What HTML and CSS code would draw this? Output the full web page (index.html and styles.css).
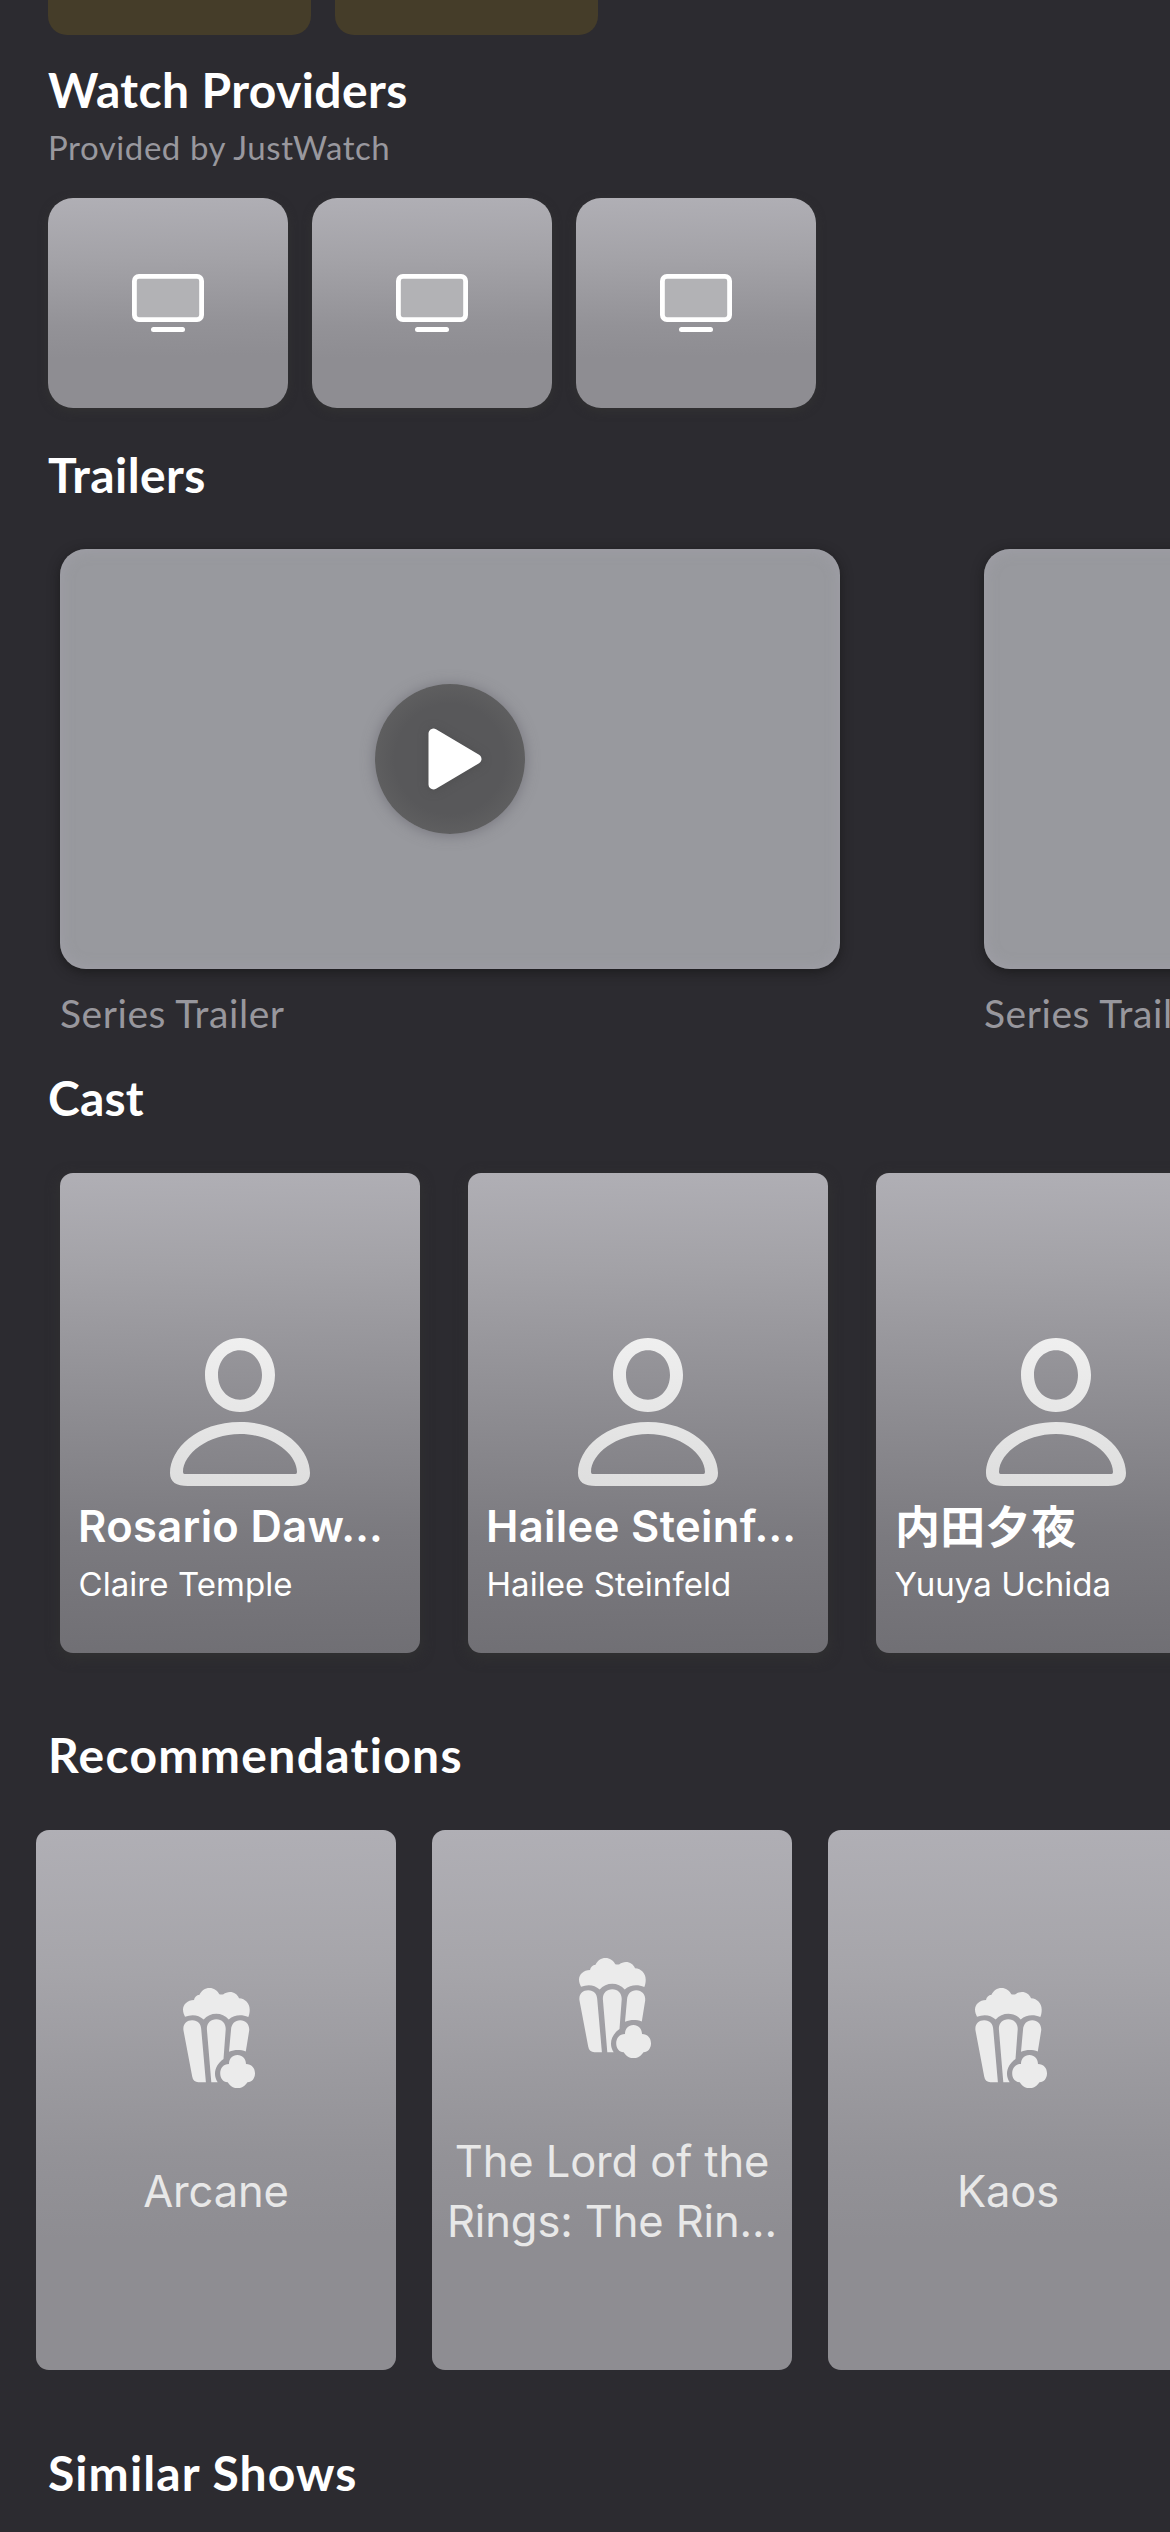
FILE: index.html
```
<!DOCTYPE html>
<html lang="en">
<head>
<meta charset="utf-8">
<title>Show details</title>
<link rel="stylesheet" href="styles.css">
</head>
<body>
<svg class="defs" width="0" height="0" aria-hidden="true">
  <defs>
    <linearGradient id="person-fill" x1="0" y1="0" x2="0" y2="148" gradientUnits="userSpaceOnUse">
      <stop offset="0" stop-color="#efefef"/><stop offset="1" stop-color="#dedede"/>
    </linearGradient>
    <symbol id="tv" viewBox="0 0 72 58">
      <rect x="2.4" y="2.4" width="67.2" height="43.2" rx="4.5" fill="#b2b2b5" stroke="#fff" stroke-width="4.8"/>
      <rect x="19" y="53" width="34" height="5" rx="2.5" fill="#fff"/>
    </symbol>
    <symbol id="person" viewBox="0 0 140 148">
      <g fill="url(#person-fill)" fill-rule="evenodd">
        <path d="M70 0C89.500 0 105 16 105 37S89.500 74 70 74 35 58 35 37 50.500 0 70 0ZM70 12.300C57.500 12.300 48 23 48 37S57.500 61.700 70 61.700 92 51 92 37 82.500 12.300 70 12.300Z"/>
        <path d="M70 84C113 84 140 111 140 135C140 144 134 148 122 148H18C6 148 0 144 0 135C0 111 27 84 70 84ZM70 96C38 96 13 116 13 134Q13 136 14.500 136H125.500Q127 136 127 134C127 116 102 96 70 96Z"/>
      </g>
    </symbol>
    <symbol id="popcorn" viewBox="0 0 72 100.500">
      <g fill="#ebebeb">
        <path d="M2 28.700C1 26.500 0 24.500 0 21.500C0 16.500 4.500 12 11 12C11.500 9 13.500 7 16.500 6.700C18.500 2.500 22 0 26.500 0S34 2.300 36.300 6.200Q38.500 7 40.500 6.200C42 5 44.500 4 47 4C51 4 54.500 6.500 56 10.200C62.500 10.600 66.700 15.500 66.700 21.500C66.700 24.500 66.200 27 65.300 29C58.500 26.200 51.500 26.500 45.700 31.500C39.500 23.700 27 23.700 20.700 31.500C15.500 26.500 8.500 26.200 2 28.700Z"/>
        <path d="M.5 42.500C-.5 36.500 3.500 32.300 9.200 32.300S18 36 18.200 41L22.900 94.200H15.500C12 94.200 9.800 92.300 9.200 88.500Z"/>
        <path d="M23.900 41.500C23.500 35.500 27.500 31.300 33.300 31.300S43 35.500 42.700 41.500L40.500 71C32 77 29.500 86.500 34.700 94.200H28.300Z"/>
        <path d="M48 42C48.300 36 52 32.300 57.300 32.300S66.800 36.500 66.200 42.500L62.800 63.500C57.500 61.500 51.500 61.500 46 63.800Z"/>
        <path d="M46 76C46 70.500 49.500 67 54.400 67S62.900 70.500 63 76C68.500 76 72 80 72 85.300S69 94 64.500 94.300C62 98 58.500 100.300 54.500 100.300S47 98 44.700 94.300C40 94 37.200 90.500 37.200 85.300S40.500 76 46 76Z"/>
      </g>
    </symbol>
  </defs>
</svg>

<main class="screen">
  <div class="tabs"><span class="tab"></span><span class="tab"></span></div>

  <section class="providers">
    <h2 class="title title-providers">Watch Providers</h2>
    <p class="source">Provided by JustWatch</p>
    <div class="provider-row">
      <div class="provider"><svg class="tv"><use href="#tv"/></svg></div>
      <div class="provider"><svg class="tv"><use href="#tv"/></svg></div>
      <div class="provider"><svg class="tv"><use href="#tv"/></svg></div>
    </div>
  </section>

  <section class="trailers">
    <h2 class="title">Trailers</h2>
    <div class="trailer-row">
      <article class="trailer">
        <div class="thumb">
          <div class="play">
            <svg class="triangle" viewBox="0 0 54 62"><path d="M5.500 5.500V56.500L48.500 31Z" fill="#fff" stroke="#fff" stroke-width="10" stroke-linejoin="round"/></svg>
          </div>
        </div>
        <p class="caption">Series Trailer</p>
      </article>
      <article class="trailer">
        <div class="thumb"></div>
        <p class="caption">Series Trailer</p>
      </article>
    </div>
  </section>

  <section class="cast">
    <h2 class="title title-cast">Cast</h2>
    <div class="cast-row">
      <article class="person">
        <svg class="person-icon"><use href="#person"/></svg>
        <h3 class="name">Rosario Daw…</h3>
        <p class="role">Claire Temple</p>
      </article>
      <article class="person">
        <svg class="person-icon"><use href="#person"/></svg>
        <h3 class="name">Hailee Steinf…</h3>
        <p class="role">Hailee Steinfeld</p>
      </article>
      <article class="person">
        <svg class="person-icon"><use href="#person"/></svg>
        <h3 class="name name-cjk" lang="ja">内田夕夜</h3>
        <p class="role">Yuuya Uchida</p>
      </article>
    </div>
  </section>

  <section class="recommendations">
    <h2 class="title title-recommendations">Recommendations</h2>
    <div class="poster-row">
      <article class="poster">
        <svg class="popcorn"><use href="#popcorn"/></svg>
        <p class="poster-title">Arcane</p>
      </article>
      <article class="poster">
        <svg class="popcorn"><use href="#popcorn"/></svg>
        <p class="poster-title">The Lord of the<br>Rings: The Rin…</p>
      </article>
      <article class="poster">
        <svg class="popcorn"><use href="#popcorn"/></svg>
        <p class="poster-title">Kaos</p>
      </article>
    </div>
  </section>

  <section class="similar">
    <h2 class="title title-similar">Similar Shows</h2>
  </section>
</main>
</body>
</html>
```
FILE: styles.css
```
* {
  box-sizing: border-box;
  margin: 0;
}

body {
  background: #2c2b30;
  color: #fff;
  font-family: Inter, "Noto Sans CJK JP", sans-serif;
}

.defs {
  display: block;
}

.screen {
  width: 1170px;
  height: 2532px;
  overflow: hidden;
}

.tabs {
  display: flex;
  gap: 24px;
  height: 35px;
  padding-left: 48px;
}

.tab {
  width: 263px;
  background: #453d29;
  border-radius: 0 0 19px 19px;
}

.title {
  padding-left: 48px;
  font: 700 48px/60px Lato, sans-serif;
  letter-spacing: 0.4px;
}

.title-cast {
  letter-spacing: 0.2px;
}

.title-recommendations {
  letter-spacing: 1.3px;
}

.title-similar {
  letter-spacing: 1.1px;
}

/* Watch providers */
.providers {
  padding-top: 25px;
}

.source {
  margin-top: 6px;
  padding-left: 48px;
  color: #99989e;
  font: 400 33px/42px Lato, sans-serif;
  letter-spacing: 0.56px;
}

.provider-row {
  display: flex;
  gap: 24px;
  margin-top: 30px;
  padding-left: 48px;
}

.provider {
  display: flex;
  align-items: center;
  justify-content: center;
  width: 240px;
  height: 210px;
  background: linear-gradient(179deg, #b0afb5 0%, #a3a2a7 30%, #939297 60%, #8e8d92 75%);
  border-radius: 25px;
  box-shadow: 0 3px 10px #323232;
}

.tv {
  width: 72px;
  height: 58px;
}

/* Trailers */
.trailers {
  padding-top: 37px;
}

.trailer-row {
  display: flex;
  gap: 144px;
  margin-top: 44px;
  padding-left: 60px;
}

.trailer {
  flex: none;
  width: 780px;
}

.thumb {
  display: flex;
  align-items: center;
  justify-content: center;
  height: 420px;
  background: #98999e;
  border-radius: 26px;
  box-shadow: 0 3px 12px rgba(20, 20, 20, 0.65), inset 0 0 14px rgba(164, 162, 172, 0.7);
}

.play {
  display: flex;
  align-items: center;
  justify-content: center;
  width: 150px;
  height: 150px;
  padding-left: 9px;
  background: radial-gradient(circle, #58585a 0 52%, #5f5f60 72%);
  border-radius: 50%;
  box-shadow: 0 1px 14px rgba(95, 93, 103, 0.6);
}

.triangle {
  width: 54px;
  height: 62px;
  filter: drop-shadow(0 1px 5px rgba(70, 70, 70, 0.5));
}

.caption {
  margin-top: 20px;
  color: #98979d;
  font: 400 39px/48px Lato, sans-serif;
  letter-spacing: 0.55px;
}

/* Cast */
.cast {
  padding-top: 31px;
}

.cast-row {
  display: flex;
  gap: 48px;
  margin-top: 45px;
  padding-left: 60px;
}

.person {
  display: flex;
  flex: none;
  flex-direction: column;
  justify-content: flex-end;
  width: 360px;
  height: 480px;
  padding: 0 18px 49px;
  background: linear-gradient(179deg, #b0afb5 0%, #a3a2a7 20%, #949398 40%, #8a898e 54%, #7b7a7f 75%, #706f74 100%);
  border-radius: 13px;
  box-shadow: 0 4px 14px #323232;
}

.person-icon {
  align-self: center;
  width: 140px;
  height: 148px;
}

.name {
  margin-top: 13px;
  font-size: 43.5px;
  font-weight: 600;
  line-height: 54px;
  letter-spacing: 0.35px;
  white-space: nowrap;
}

.name-cjk {
  padding-left: 1px;
  font-family: "Noto Sans CJK JP", sans-serif;
  font-size: 45px;
  font-weight: 700;
  line-height: 52px;
  padding-bottom: 2px;
  letter-spacing: 0.3px;
}

.role {
  margin-top: 11px;
  font-size: 33px;
  line-height: 40px;
  padding-left: 0.5px;
  letter-spacing: 0.06px;
  white-space: nowrap;
}

/* Recommendations */
.recommendations {
  padding-top: 72px;
}

.poster-row {
  display: flex;
  gap: 36px;
  margin-top: 45px;
  padding-left: 36px;
}

.poster {
  display: flex;
  flex: none;
  flex-direction: column;
  align-items: center;
  justify-content: center;
  width: 360px;
  height: 540px;
  padding-top: 9px;
  background: linear-gradient(179deg, #b0afb5 0%, #a6a5aa 25%, #9b9a9f 45%, #939297 60%, #8e8d92 75%);
  border-radius: 13px;
}

.popcorn {
  width: 72px;
  height: 100.5px;
  margin-left: 6px;
}

.poster-title {
  margin-top: 73px;
  color: #e8e8e8;
  font-size: 43.5px;
  line-height: 60px;
  letter-spacing: -0.12px;
  text-align: center;
  white-space: nowrap;
}

.similar {
  padding-top: 73px;
}
```
